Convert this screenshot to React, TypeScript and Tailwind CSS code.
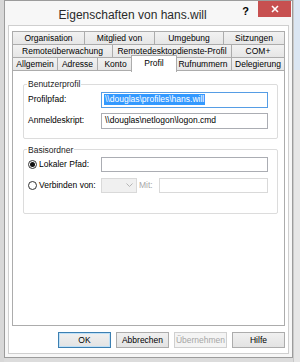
import React from 'react'

type Tab = { label: string; w: string; active?: boolean }

const row1: Tab[] = [
  { label: 'Organisation', w: 'w-[73px]' },
  { label: 'Mitglied von', w: 'w-[71px]' },
  { label: 'Umgebung', w: 'w-[70px]' },
  { label: 'Sitzungen', w: 'w-[62px]' },
]

const row2: Tab[] = [
  { label: 'Remoteüberwachung', w: 'w-[101px]' },
  { label: 'Remotedesktopdienste-Profil', w: 'w-[120px]' },
  { label: 'COM+', w: 'w-[54px]' },
]

const row3: Tab[] = [
  { label: 'Allgemein', w: 'w-[46px]' },
  { label: 'Adresse', w: 'w-[41px]' },
  { label: 'Konto', w: 'w-[37px]' },
  { label: 'Profil', w: 'w-[46px]', active: true },
  { label: 'Rufnummern', w: 'w-[58px]' },
  { label: 'Delegierung', w: 'w-[54px]' },
]

const TabRow: React.FC<{ tabs: Tab[]; first?: boolean }> = ({ tabs, first }) => (
  <div className={`flex h-[14px] items-start ${first ? '' : '-mt-px'}`}>
    {tabs.map((t, i) => {
      const prevActive = i > 0 && tabs[i - 1].active
      if (t.active) {
        return (
          <div
            key={t.label}
            className={`${t.w} relative z-10 -ml-[3px] -mt-[2px] h-[17px] flex items-center justify-center border border-b-0 border-[#acacac] bg-white pb-px`}
          >
            {t.label}
          </div>
        )
      }
      return (
        <div
          key={t.label}
          className={`${t.w} ${i === 0 ? '' : prevActive ? '-ml-[3px]' : '-ml-px'} h-[14px] flex items-center justify-center whitespace-nowrap border border-[#acacac] bg-gradient-to-b from-[#f2f2f2] to-[#e6e6e6]`}
        >
          {t.label}
        </div>
      )
    })}
  </div>
)

const Radio: React.FC<{ checked?: boolean }> = ({ checked }) => (
  <span className="w-[9px] h-[9px] rounded-full border border-[#333] bg-white flex items-center justify-center">
    {checked && <span className="w-[5px] h-[5px] rounded-full bg-[#111]" />}
  </span>
)

const Btn: React.FC<{ label: string; def?: boolean; disabled?: boolean }> = ({ label, def, disabled }) => (
  <div
    className={`w-[53px] h-[16px] flex items-center justify-center border bg-gradient-to-b ${
      def
        ? 'border-[#3c7fb1] shadow-[inset_0_0_0_1px_#bfe0f7] from-[#f0f0f0] to-[#e3e3e3]'
        : disabled
          ? 'border-[#d0d0d0] text-[#a6a6a6] from-[#f4f4f4] to-[#f4f4f4]'
          : 'border-[#acacac] from-[#f0f0f0] to-[#e3e3e3]'
    }`}
  >
    {label}
  </div>
)

export default function App() {
  return (
    <div className="w-[300px] h-[362px] flex bg-[#dcdcdc] overflow-hidden font-['Liberation_Sans',Arial,sans-serif] text-[8.5px] leading-none text-black">
      <div className="w-[4px] bg-[#d8d8d8]" />
      <div className="w-[289px] h-[358px] flex flex-col border border-[#9c9c9c] bg-[#f7f7f7]">
        {/* title bar */}
        <div className="h-[24px] flex items-start">
          <div className="flex-1 pt-[8px] pl-[18px] text-center text-[12px] text-[#2a2a2a]">Eigenschaften von hans.will</div>
          <div className="pt-[5px] pr-[9px] text-[11px] font-bold">?</div>
          <div className="w-[33px] h-[16px] mr-px bg-[#c75050] flex items-center justify-center">
            <svg width="8" height="8" viewBox="0 0 8 8">
              <path d="M1 1 L7 7 M7 1 L1 7" stroke="#fff" strokeWidth="1.6" />
            </svg>
          </div>
        </div>
        {/* client */}
        <div className="flex-1 mx-[3px] mb-[3px] border border-[#cfcfcf] bg-white flex flex-col pl-[3px] pt-[5px]">
          <div className="w-[273px]">
            <TabRow tabs={row1} first />
            <TabRow tabs={row2} />
            <TabRow tabs={row3} />
            <div className="-mt-px h-[256px] border border-[#acacac] bg-white pl-[10px] pt-[9px]">
              <fieldset className="w-[255px] border border-[#dcdcdc] rounded-[2px] px-[4px] pb-[9px]">
                <legend className="px-[1px] -ml-px text-[#222]">Benutzerprofil</legend>
                <div className="flex items-center mt-[3px]">
                  <span className="w-[73px]">Profilpfad:</span>
                  <div className="w-[167px] h-[16px] border border-[#569de5] flex items-center pl-[2px]">
                    <span className="bg-[#3399ff] text-white px-px py-[1px]">\\douglas\profiles\hans.will</span>
                  </div>
                </div>
                <div className="flex items-center mt-[5px]">
                  <span className="w-[73px]">Anmeldeskript:</span>
                  <div className="w-[167px] h-[16px] border border-[#abadb3] flex items-center pl-[3px]">\\douglas\netlogon\logon.cmd</div>
                </div>
              </fieldset>
              <fieldset className="w-[255px] mt-[7px] border border-[#dcdcdc] rounded-[2px] px-[4px] pb-[20px]">
                <legend className="px-[1px] -ml-px text-[#222]">Basisordner</legend>
                <div className="flex items-center mt-[3px]">
                  <span className="w-[73px] flex items-center gap-[2px]">
                    <Radio checked />
                    Lokaler Pfad:
                  </span>
                  <div className="w-[167px] h-[15px] border border-[#abadb3]" />
                </div>
                <div className="flex items-center mt-[6px]">
                  <span className="w-[73px] flex items-center gap-[2px]">
                    <Radio />
                    Verbinden von:
                  </span>
                  <div className="w-[36px] h-[15px] border border-[#d9d9d9] bg-[#f0f0f0] flex items-center justify-end pr-[3px]">
                    <svg width="7" height="5" viewBox="0 0 7 5">
                      <path d="M0.5 0.5 L3.5 3.5 L6.5 0.5" fill="none" stroke="#b5b5b5" strokeWidth="1" />
                    </svg>
                  </div>
                  <span className="ml-[2px] w-[20px] text-[#a8a8a8]">Mit:</span>
                  <div className="w-[109px] h-[15px] border border-[#d9d9d9]" />
                </div>
              </fieldset>
            </div>
          </div>
          <div className="mt-[6px] flex justify-end gap-[5px] pr-[3px]">
            <Btn label="OK" def />
            <Btn label="Abbrechen" />
            <Btn label="Übernehmen" disabled />
            <Btn label="Hilfe" />
          </div>
        </div>
      </div>
      <div className="flex-1 flex flex-col border-l border-[#c9c9c9]">
        <div className="h-[70px] bg-[#dbe6f3]" />
        <div className="flex-1 bg-[#e6e6e6]" />
      </div>
    </div>
  )
}
